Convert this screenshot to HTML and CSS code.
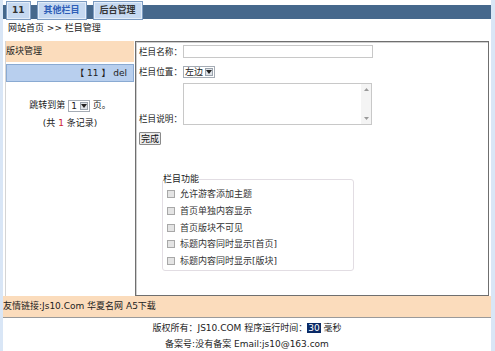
FILE: index.html
```html
<!DOCTYPE html>
<html>
<head>
    <meta http-equiv="Content-Type" content="text/html; charset=utf-8" />
    <title>栏目管理</title>
    <link rel="stylesheet" href="styles.css">
</head>
<body>
<div class="page">
    <div class="nav">
        <a class="tab">11</a>
        <a class="tab tab_blue">其他栏目</a>
        <a class="tab tab_bold">后台管理</a>
    </div>
    <div class="crumb">网站首页 &gt;&gt; 栏目管理</div>

    <div class="main">
        <div class="side">
            <div class="side_tit">版块管理</div>
            <div class="side_item">【 11 】 del</div>
            <div class="pager">跳转到第 <span class="sel sel_num"><span class="sel_val">1</span><span class="sel_btn"><svg width="6" height="4" viewBox="0 0 6 4"><path d="M0 0h6L3 4z" fill="#222"/></svg></span></span> 页。</div>
            <div class="count">(共 <b class="red">1</b> 条记录)</div>
        </div>

        <div class="panel">
            <div class="row">
                <label>栏目名称：</label>
                <input type="text" class="txt" />
            </div>
            <div class="row row_sel">
                <label>栏目位置：</label>
                <span class="sel"><span class="sel_val">左边</span><span class="sel_btn"><svg width="6" height="4" viewBox="0 0 6 4"><path d="M0 0h6L3 4z" fill="#222"/></svg></span></span>
            </div>
            <div class="row row_area">
                <label>栏目说明：</label>
                <div class="area">
                    <div class="area_bar">
                        <svg width="5" height="3" viewBox="0 0 5 3"><path d="M0 3h5L2.5 0z" fill="#9a9a9a"/></svg>
                        <svg width="5" height="3" viewBox="0 0 5 3"><path d="M0 0h5L2.5 3z" fill="#9a9a9a"/></svg>
                    </div>
                </div>
            </div>
            <button class="btn">完成</button>

            <fieldset class="func">
                <legend>栏目功能</legend>
                <label class="chk"><input type="checkbox" />允许游客添加主题</label>
                <label class="chk"><input type="checkbox" />首页单独内容显示</label>
                <label class="chk"><input type="checkbox" />首页版块不可见</label>
                <label class="chk"><input type="checkbox" />标题内容同时显示[首页]</label>
                <label class="chk"><input type="checkbox" />标题内容同时显示[版块]</label>
            </fieldset>
        </div>
    </div>

    <div class="links">友情链接:Js10.Com 华夏名网 A5下载</div>
    <div class="copy">
        <p>版权所有：JS10.COM 程序运行时间：<span class="hl">30</span> 毫秒</p>
        <p>备案号:没有备案 Email:js10@163.com</p>
    </div>
</div>
</body>
</html>
```

FILE: styles.css
```css
body {margin:0;background-color:#d9e6f6;font:normal 9px/12px Tahoma, "DejaVu Sans", "Noto Sans CJK SC", sans-serif;color:#222;}
.page {margin:0 4px 0 3px;height:351px;background-color:#FFFFFF;overflow:hidden;}

.nav {display:flex;gap:6px;height:20px;padding:1px 0 0 3px;background:linear-gradient(#FFFFFF 0 5px, #46688c 5px 19px, #FFFFFF 19px);}
.tab {display:block;height:17px;padding:0 5px;line-height:17px;font-weight:bold;color:#333;border:1px solid #7d9cc2;background-color:#c6d9f1;box-shadow:inset 0 0 0 1px #e3edf9;}
.tab_blue {color:#2f5fb8;padding:0 6px;}
.tab_bold {padding:0 6px;}

.crumb {height:19px;padding:1px 0 0 5px;line-height:12px;}

.main {display:flex;height:255px;padding-left:2px;}
.side {width:128px;border-left:1px solid #d4d4d4;}
.side_tit {height:21px;line-height:21px;background-color:#fbdcbc;}
.side_item {height:16px;margin-top:2px;padding-right:6px;line-height:16px;text-align:right;background-color:#b8cfee;border:1px solid #8aaad2;}
.pager {margin-top:16px;text-align:center;line-height:14px;}
.count {margin-top:5px;text-align:center;}
.red {font-weight:normal;color:#cc2233;}

.sel {display:inline-flex;vertical-align:middle;height:10px;border:1px solid #a5acb5;background-color:#FFFFFF;}
.sel_val {padding:0 1px;line-height:10px;font-size:9px;}
.sel_btn {display:flex;align-items:center;justify-content:center;width:8px;margin:1px;background-color:#dfe3e8;border:1px solid #9aa3ad;box-sizing:border-box;}
.sel_num .sel_val {padding:0 2px;}

.panel {flex:1;margin-left:1px;margin-right:2px;padding:3px 0 0 3px;border:1px solid #6f6f6f;box-shadow:inset 1px 1px 0 #cfcfcf;}
.row {display:flex;align-items:center;}
.row label {flex:0 0 44px;white-space:nowrap;font-size:8.6px;}
.txt {width:190px;height:13px;margin:0;padding:0;border:1px solid #c8c8c8;box-sizing:border-box;font-size:9px;}
.row_sel {margin-top:8px;}
.row_area {align-items:flex-end;margin-top:5px;}
.area {display:flex;justify-content:flex-end;width:189px;height:42px;border:1px solid #c8c8c8;box-sizing:border-box;}
.area_bar {display:flex;flex-direction:column;justify-content:space-between;align-items:center;width:10px;padding:4px 0;background-color:#f4f4f4;}
.btn {display:block;height:13px;margin:7px 0 0;padding:0 1px;font:inherit;line-height:10px;color:#111;background-color:#ececec;border:1px solid #8a8a8a;border-radius:1px;}

.func {width:192px;margin:29px 0 0 23px;padding:2px 0 1px 3px;border:1px solid #e2dde3;border-radius:3px;box-sizing:border-box;}
.func legend {padding:0;margin-left:-3px;line-height:10px;}
.chk {display:flex;align-items:center;height:16.7px;white-space:nowrap;color:#333;}
.chk input {appearance:none;width:8px;height:8px;margin:0 5px 0 1px;border:1px solid #a8a8a8;background-color:#e4e4e4;}

.links {height:21px;line-height:21px;background-color:#fbdcbc;border-bottom:1px solid #9a9a9a;}
.copy {padding-top:2px;text-align:center;}
.copy p {margin:0;line-height:16px;}
.hl {padding:0 1px;color:#FFFFFF;background-color:#0a2a66;}
```
